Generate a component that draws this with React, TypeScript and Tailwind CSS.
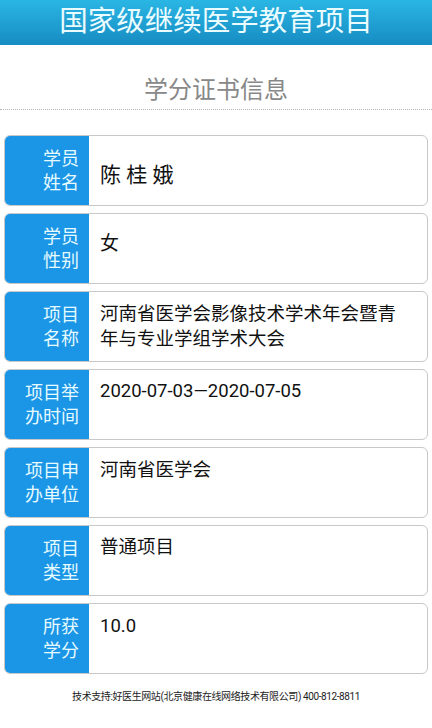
import React from "react";

type Row = { label: string[]; value: React.ReactNode; pt: string; cls?: string };

const rows: Row[] = [
  { label: ["学员", "姓名"], value: "陈 桂 娥", pt: "pt-[27px]", cls: "text-[21px]" },
  { label: ["学员", "性别"], value: "女", pt: "pt-[17px]", cls: "text-[19px]" },
  {
    label: ["项目", "名称"],
    value: (
      <>
        河南省医学会影像技术学术年会暨青
        <br />
        年与专业学组学术大会
      </>
    ),
    pt: "pt-[10px]",
  },
  { label: ["项目举", "办时间"], value: "2020-07-03—2020-07-05", pt: "pt-[9px]" },
  { label: ["项目申", "办单位"], value: "河南省医学会", pt: "pt-[10px]" },
  { label: ["项目", "类型"], value: "普通项目", pt: "pt-[9px]" },
  { label: ["所获", "学分"], value: "10.0", pt: "pt-[10px]" },
];

export default function App() {
  return (
    <div
      className="w-[432px] min-h-[728px] bg-white flex flex-col"
      style={{ fontFamily: "Roboto, 'Noto Sans CJK SC', sans-serif" }}
    >
      <div className="h-[45px] bg-gradient-to-b from-[#2ab6e4] to-[#178cc2] flex items-center justify-center">
        <span className="text-[28.5px] leading-none text-[#eafcff]">国家级继续医学教育项目</span>
      </div>
      <div className="pt-[32px] text-center text-[24px] leading-[26px] text-[#888888]">学分证书信息</div>
      <div className="mt-[6px] border-b border-dotted border-[#b5b5b5]" />
      <div className="mt-[25px] mx-[4px] flex flex-col gap-[7px]">
        {rows.map((r, i) => (
          <div key={i} className="h-[71px] flex rounded-[6px] border border-[#c8c8c8] overflow-hidden bg-white">
            <div className="w-[84px] shrink-0 bg-[#1b95e6] flex flex-col justify-center items-end pr-[10px] text-[18px] leading-[24px] text-[#e6fbff]">
              {r.label.map((l, j) => (
                <div key={j}>{l}</div>
              ))}
            </div>
            <div className={`flex-1 pl-[11px] ${r.pt} ${r.cls ?? "text-[18.5px]"} leading-[25px] text-[#111111]`}>
              {r.value}
            </div>
          </div>
        ))}
      </div>
      <div className="mt-[17px] text-center text-[10px] leading-[12px] tracking-[-0.4px] text-[#222222]">
        技术支持:好医生网站(北京健康在线网络技术有限公司) 400-812-8811
      </div>
    </div>
  );
}
